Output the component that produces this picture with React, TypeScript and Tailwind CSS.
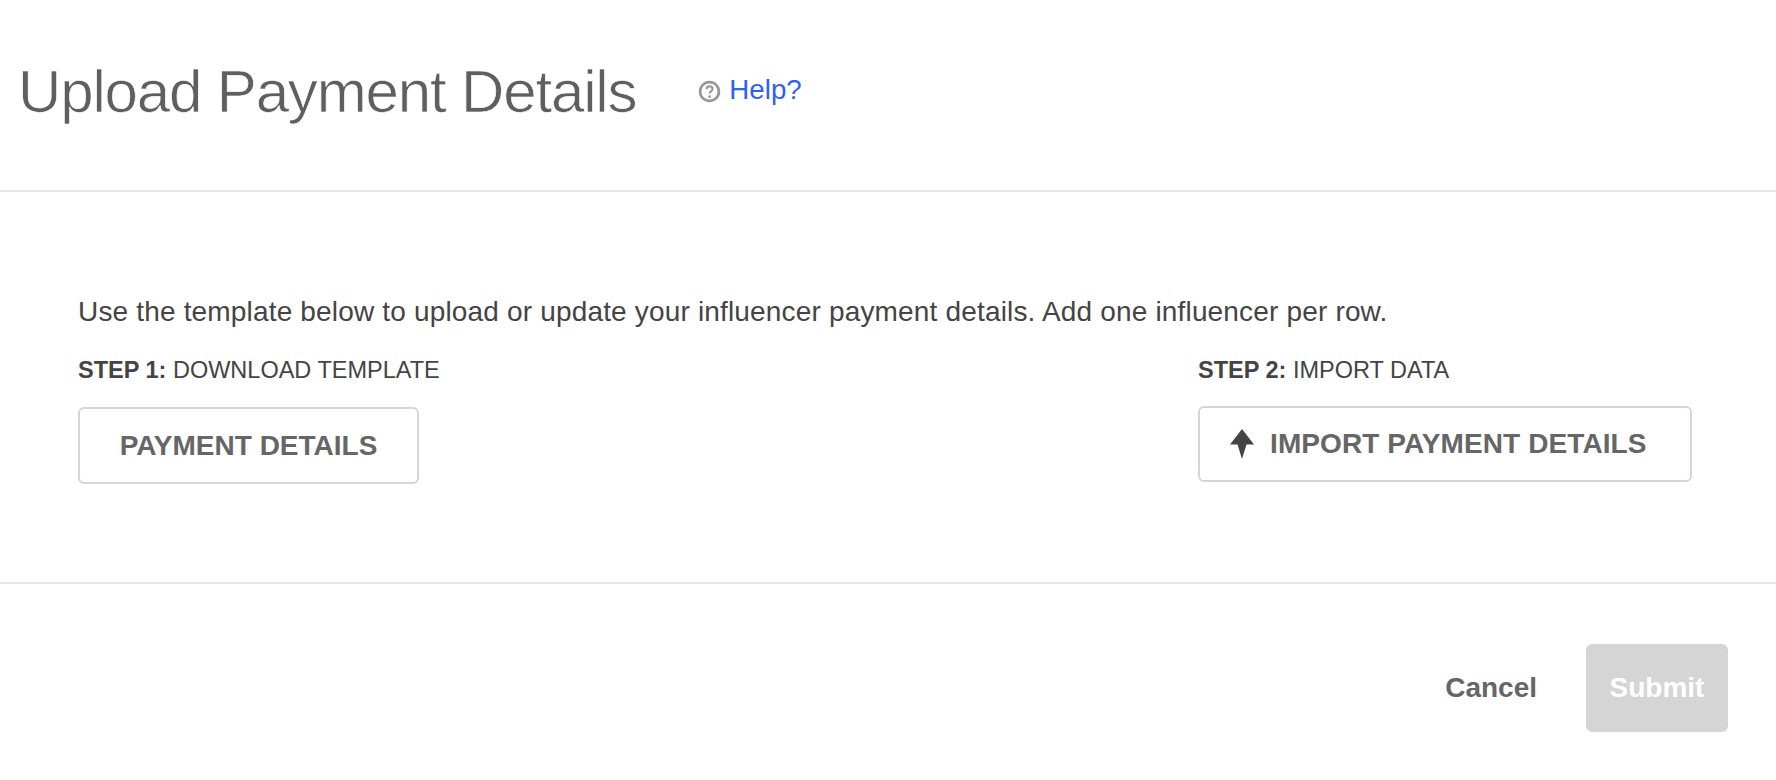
export default function App() {
  return (
    <div className="w-[1776px] h-[780px] bg-white overflow-hidden font-['Liberation_Sans',Arial,sans-serif]">
      <header className="h-[192px] border-b-2 border-[#e5e5e5] flex items-start pl-[18px] pt-[54px]">
        <h1 className="text-[60px] leading-[76px] font-normal text-[#5f5f5f] tracking-[-1.15px] [-webkit-text-stroke:0.7px_white]">Upload Payment Details</h1>
        <div className="flex items-center ml-[62px] mt-[18px]">
          <svg width="23" height="23" viewBox="0 0 22 22" fill="none" className="mt-[3px]">
            <circle cx="11" cy="11" r="9" stroke="#999999" strokeWidth="2.6" />
            <path d="M8.2 8.8c0-1.7 1.3-2.7 2.9-2.7 1.6 0 2.8 1 2.8 2.4 0 1.2-.7 1.8-1.5 2.4-.8.6-1.2 1-1.2 2" stroke="#999999" strokeWidth="2" fill="none" />
            <circle cx="11.1" cy="16" r="1.3" fill="#999999" />
          </svg>
          <a className="ml-[8px] text-[27.7px] leading-[36px] text-[#2c62f0]">Help?</a>
        </div>
      </header>
      <main className="h-[392px] border-b-2 border-[#e5e5e5] pl-[78px] pr-[84px] pt-[103px]">
        <p className="text-[28px] leading-[34px] tracking-[0.17px] text-[#444444]">Use the template below to upload or update your influencer payment details. Add one influencer per row.</p>
        <div className="flex justify-between mt-[26px]">
          <div>
            <div className="text-[23.5px] leading-[30px] text-[#444444]"><b>STEP 1:</b> DOWNLOAD TEMPLATE</div>
            <button className="mt-[22px] w-[341px] h-[77px] rounded-[6px] border-2 border-[#d6d6d6] bg-white text-[28px] font-bold text-[#666666]">PAYMENT DETAILS</button>
          </div>
          <div className="w-[494px]">
            <div className="text-[23.5px] leading-[30px] text-[#444444]"><b>STEP 2:</b> IMPORT DATA</div>
            <button className="mt-[21px] w-[494px] h-[76px] rounded-[6px] border-2 border-[#d4d4da] bg-white flex items-center pl-[30px] text-[28px] tracking-[0.1px] font-bold text-[#666666]">
              <svg width="24" height="30" viewBox="0 0 24 30" className="mr-[16px]">
                <path d="M12 0 L24 15.5 L16.5 15.5 L12 30 L7.5 15.5 L0 15.5 Z" fill="#444444" />
              </svg>
              IMPORT PAYMENT DETAILS
            </button>
          </div>
        </div>
      </main>
      <footer className="flex justify-end items-start pr-[48px] pt-[60px]">
        <button className="text-[28px] font-bold text-[#666666] h-[88px] mr-[49px]">Cancel</button>
        <button className="w-[142px] h-[88px] rounded-[6px] bg-[#d5d5d5] text-[28px] font-bold text-white">Submit</button>
      </footer>
    </div>
  );
}
